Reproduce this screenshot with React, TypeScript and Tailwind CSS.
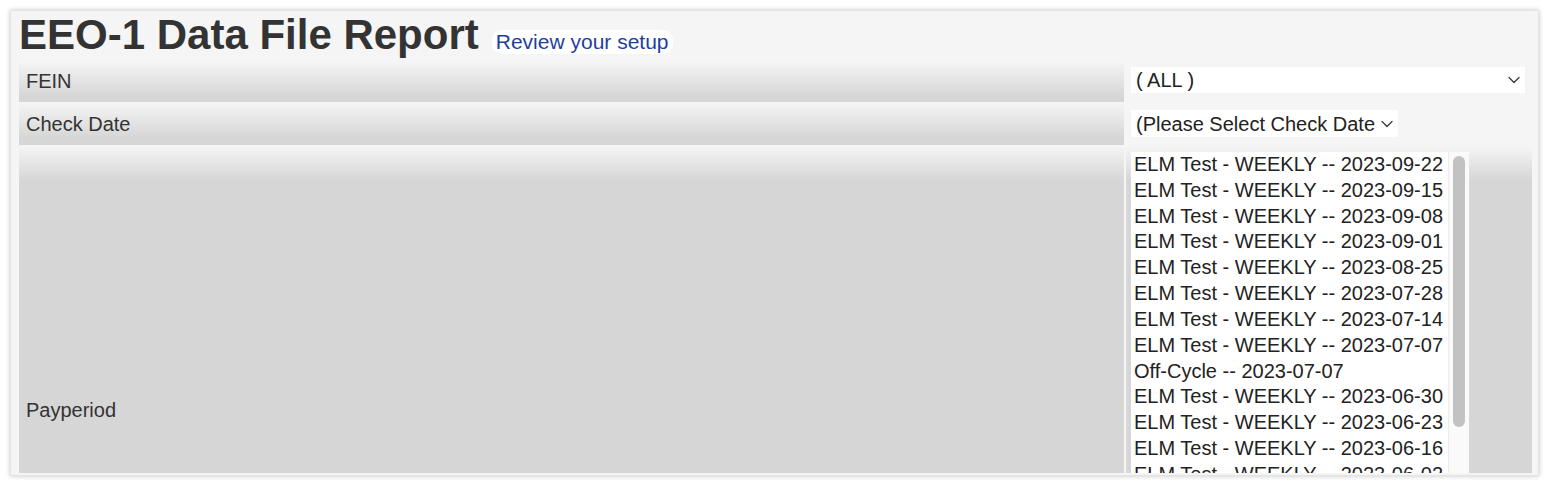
import React from 'react';

const payperiods = [
  'ELM Test - WEEKLY -- 2023-09-22',
  'ELM Test - WEEKLY -- 2023-09-15',
  'ELM Test - WEEKLY -- 2023-09-08',
  'ELM Test - WEEKLY -- 2023-09-01',
  'ELM Test - WEEKLY -- 2023-08-25',
  'ELM Test - WEEKLY -- 2023-07-28',
  'ELM Test - WEEKLY -- 2023-07-14',
  'ELM Test - WEEKLY -- 2023-07-07',
  'Off-Cycle -- 2023-07-07',
  'ELM Test - WEEKLY -- 2023-06-30',
  'ELM Test - WEEKLY -- 2023-06-23',
  'ELM Test - WEEKLY -- 2023-06-16',
  'ELM Test - WEEKLY -- 2023-06-02',
  'ELM Test - WEEKLY -- 2023-05-26',
  'ELM Test - WEEKLY -- 2023-05-19',
  'ELM Test - WEEKLY -- 2023-05-12',
  'ELM Test - WEEKLY -- 2023-05-05',
  'ELM Test - WEEKLY -- 2023-04-28',
  'ELM Test - WEEKLY -- 2023-04-21',
  'ELM Test - WEEKLY -- 2023-04-14',
];

const Chevron = () => (
  <svg width="12" height="8" viewBox="0 0 12 8" fill="none" className="shrink-0">
    <path d="M1 1.5l5 5 5-5" stroke="#333" strokeWidth="1.2" strokeLinecap="round" strokeLinejoin="round" />
  </svg>
);

const labelCell = 'bg-[linear-gradient(to_bottom,#f4f4f4,#d6d6d6_34px)] pl-[7px] flex items-center text-[20px] text-[#333]';

export default function App() {
  return (
    <div className="min-h-screen bg-white pt-[10px] pl-[10px] font-['Liberation_Sans',Arial,sans-serif]">
      <div className="w-[1529px] h-[466px] border border-[#e4e4e4] bg-[#f5f5f5] shadow-[0_0_5px_rgba(0,0,0,0.22)] pl-[8px] pr-[6px] pb-[2px]">
        <div className="h-full overflow-hidden">
          <div className="h-[51px] flex items-baseline">
            <h1 className="text-[42px] leading-[48px] font-bold text-[#333]">EEO-1 Data File Report</h1>
            <a className="ml-[13px] px-[4px] rounded-[10px] bg-white text-[21px] leading-[24px] text-[#1f3f9f]">
              Review your setup
            </a>
          </div>

          <div className="grid grid-cols-[1105px_406px] gap-x-[2px] gap-y-[2px]">
            <div className={`${labelCell} h-[40px] pb-[3px]`}>FEIN</div>
            <div className="h-[40px] pl-[5px] pr-[7px] pt-[5px]">
              <div className="h-[26px] bg-white flex items-center justify-between pl-[5px] pr-[5px] text-[20px] text-[#222]">
                <span>( ALL )</span>
                <Chevron />
              </div>
            </div>

            <div className={`${labelCell} h-[41px] pb-[2px]`}>Check Date</div>
            <div className="h-[41px] pl-[5px] pt-[6px]">
              <div className="w-[267px] h-[27px] bg-white flex items-center pl-[5px] pr-[5px] text-[20px] text-[#222] overflow-hidden">
                <span className="whitespace-nowrap overflow-hidden">(Please Select Check Date</span>
                <span className="ml-[6px]"><Chevron /></span>
              </div>
            </div>

            <div className={`${labelCell} h-[526px]`}>Payperiod</div>
            <div className="h-[526px] bg-[linear-gradient(to_bottom,#f4f4f4,#d6d6d6_34px)] pl-[5px] pt-[5px]">
              <div className="flex w-[338px] h-[516px]">
                <div className="flex-1 bg-white pl-[3px] overflow-hidden">
                  {payperiods.map((p, i) => (
                    <div key={i} className="text-[20px] leading-[25.83px] text-[#222] whitespace-nowrap">{p}</div>
                  ))}
                </div>
                <div className="w-[21px] bg-[#fafafa] border-l border-[#ececec] pt-[4px] flex justify-center">
                  <div className="w-[12px] h-[271px] rounded-full bg-[#c2c2c2]" />
                </div>
              </div>
            </div>
          </div>
        </div>
      </div>
    </div>
  );
}
